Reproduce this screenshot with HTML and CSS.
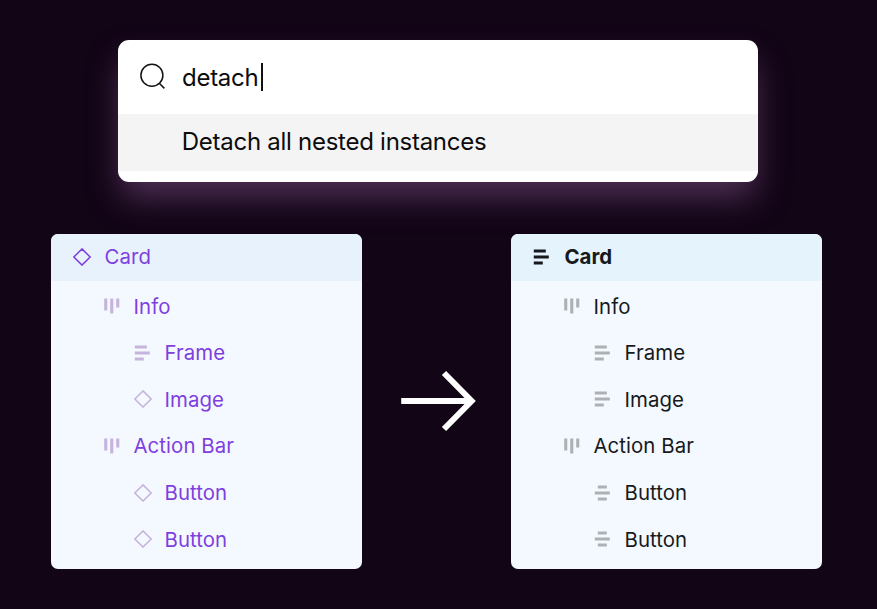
FILE: index.html
```html
<!DOCTYPE html>
<html lang="en">
<head>
<meta charset="utf-8">
<title>Detach all nested instances</title>
<link rel="stylesheet" href="styles.css">
</head>
<body>
<svg class="defs" width="0" height="0" aria-hidden="true">
  <symbol id="diamond" viewBox="0 0 18 18"><path d="M9 .9 17.1 9 9 17.1.9 9Z" fill="none" stroke="currentColor" stroke-width="1.5"/></symbol>
  <symbol id="columns" viewBox="0 0 18 18"><path d="M1.2 1.5h3.1v12H1.2zM7.2 1.5h3.1v15H7.2zM13.2 1.5h3.1v9h-3.1z" fill="currentColor"/></symbol>
  <symbol id="lines" viewBox="0 0 18 18"><path d="M.8 1.6h12v2.9h-12zM.8 7.6h15v2.9h-15zM.8 13.5h9v2.9h-9z" fill="currentColor"/></symbol>
  <symbol id="centered" viewBox="0 0 18 18"><path d="M3.8 1.6h9v2.9h-9zM.8 7.6h15v2.9h-15zM3.8 13.5h9v2.9h-9z" fill="currentColor"/></symbol>
</svg>
<main class="stage">
  <section class="search">
    <div class="field">
      <svg class="glass" width="28" height="28" viewBox="0 0 28 28"><circle cx="12.9" cy="12.3" r="11"/><path d="m20 20 5.4 5.4"/></svg>
      <span class="query">detach</span><span class="caret"></span>
    </div>
    <div class="result">Detach all nested instances</div>
  </section>
  <div class="compare">
    <ul class="panel before">
      <li class="row root"><svg class="icon"><use href="#diamond"/></svg><span>Card</span></li>
      <li class="row level1"><svg class="icon"><use href="#columns"/></svg><span>Info</span></li>
      <li class="row level2"><svg class="icon"><use href="#lines"/></svg><span>Frame</span></li>
      <li class="row level2"><svg class="icon"><use href="#diamond"/></svg><span>Image</span></li>
      <li class="row level1"><svg class="icon"><use href="#columns"/></svg><span>Action Bar</span></li>
      <li class="row level2"><svg class="icon"><use href="#diamond"/></svg><span>Button</span></li>
      <li class="row level2"><svg class="icon"><use href="#diamond"/></svg><span>Button</span></li>
    </ul>
    <svg class="arrow" width="76" height="62" viewBox="0 0 76 62"><path d="M1.2 31H71M44 3l27.6 28L44 59"/></svg>
    <ul class="panel after">
      <li class="row root"><svg class="icon"><use href="#lines"/></svg><span>Card</span></li>
      <li class="row level1"><svg class="icon"><use href="#columns"/></svg><span>Info</span></li>
      <li class="row level2"><svg class="icon"><use href="#lines"/></svg><span>Frame</span></li>
      <li class="row level2"><svg class="icon"><use href="#lines"/></svg><span>Image</span></li>
      <li class="row level1"><svg class="icon"><use href="#columns"/></svg><span>Action Bar</span></li>
      <li class="row level2"><svg class="icon"><use href="#centered"/></svg><span>Button</span></li>
      <li class="row level2"><svg class="icon"><use href="#centered"/></svg><span>Button</span></li>
    </ul>
  </div>
</main>
</body>
</html>
```
FILE: styles.css
```css
* { box-sizing: border-box; }
body {
  margin: 0;
  background: #120516;
  font-family: Inter, sans-serif;
  font-weight: 370;
  color: #17191c;
}
.defs { display: block; }
.stage {
  width: 877px;
  height: 609px;
  padding-top: 40.3px;
  overflow: hidden;
}
.search {
  width: 640px;
  height: 142.2px;
  margin-left: 117.8px;
  background: #fff;
  border-radius: 11px;
  box-shadow: 0 18px 32px -3px #4f3056;
  color: #0c0c0c;
  font-size: 24px;
  letter-spacing: -0.27px;
}
.field {
  display: flex;
  align-items: center;
  height: 73.7px;
  padding-left: 21.2px;
}
.glass { fill: none; stroke: #151515; stroke-width: 1.5; }
.query { margin: 0 0 0 15px; }
.caret { width: 1.7px; height: 28px; margin-left: 3px; background: #111; }
.result {
  height: 57px;
  padding-left: 64px;
  line-height: 55px;
  background: #f4f4f4;
}
.compare {
  display: flex;
  align-items: center;
  margin-top: 51.1px;
  padding-left: 50.8px;
}
.panel {
  width: 311.3px;
  height: 335px;
  margin: 0;
  padding: 0;
  overflow: hidden;
  list-style: none;
  background: #f4f9ff;
  border-radius: 7px;
  font-size: 20.4px;
  letter-spacing: 0.07px;
}
.row {
  display: flex;
  align-items: center;
  height: 46.6px;
  gap: 12.7px;
}
.icon { width: 18px; height: 18px; flex: none; }
.root { height: 47.7px; margin-bottom: 1.6px; padding-left: 22.2px; gap: 13.5px; }
.root span { margin-top: -1px; }
.level1 { padding-left: 52px; }
.level2 { padding-left: 83px; }
.before { color: #7f3fdf; }
.before .icon { color: #c6b4dc; }
.before .root { background: #e7f2fd; }
.before .root .icon { color: #7f3fdf; }
.after .icon { color: #adb1b4; }
.after .root { background: #e5f3fd; font-weight: 700; letter-spacing: 0; }
.after .root .icon { color: #17191c; }
.arrow { margin: 0 34.6px 0 38.1px; flex: none; fill: none; stroke: #fff; stroke-width: 6; }
```
